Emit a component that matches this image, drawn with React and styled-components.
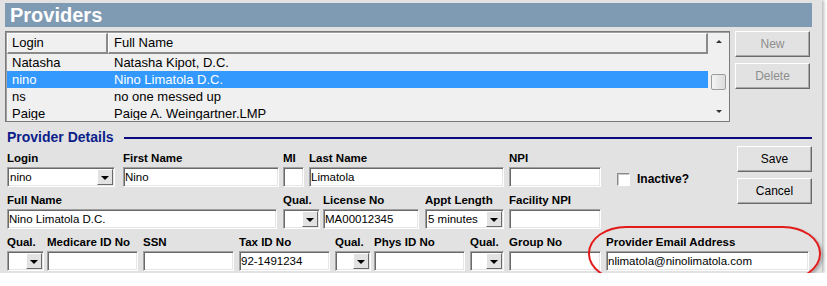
import React from "react";
import styled, { createGlobalStyle } from "styled-components";

const GlobalStyle = createGlobalStyle`
  body {
    margin: 0;
    background: #ffffff;
    font-family: "Liberation Sans", Arial, sans-serif;
  }
`;

const Window = styled.div`
  position: relative;
  width: 822px;
  height: 273px;
  box-sizing: border-box;
  padding: 3px 10px 0 5px;
  background: #e2e2e2;
  box-shadow: 2px 0 3px rgba(0, 0, 0, 0.28);
`;

const TitleBar = styled.div`
  height: 24px;
  padding-left: 5px;
  background: #7f9bb4;
  color: #ffffff;
  font: bold 20px/24px "Liberation Sans", Arial, sans-serif;
`;

const TopSection = styled.div`
  display: flex;
  gap: 5px;
  margin-top: 4px;
`;

const ListBox = styled.div`
  display: flex;
  width: 725px;
  height: 91px;
  box-sizing: border-box;
  border: 1px solid #7a7a7a;
  box-shadow: inset 1px 1px 0 #a0a0a0;
  padding: 1px;
  background: #f0f0f0;
  overflow: hidden;
`;

const ListMain = styled.div`
  width: 701px;
  overflow: hidden;
`;

const ListHeader = styled.div`
  display: flex;
  height: 21px;
`;

const HeaderCell = styled.div`
  box-sizing: border-box;
  width: ${({ $w }) => $w}px;
  padding-left: ${({ $pl }) => $pl}px;
  border-top: 1px solid #ffffff;
  border-left: 1px solid #ffffff;
  border-right: 2px solid #8a8a8a;
  border-bottom: 2px solid #8a8a8a;
  font-size: 13px;
  line-height: 18px;
  color: #000;
`;

const ListRow = styled.div`
  display: flex;
  height: 17px;
  background: ${({ $selected }) => ($selected ? "#3399ff" : "transparent")};
  color: ${({ $selected }) => ($selected ? "#ffffff" : "#000000")};
  font-size: 13px;
  line-height: 17px;
`;

const ListCell = styled.div`
  box-sizing: border-box;
  width: ${({ $w }) => ($w ? `${$w}px` : "auto")};
  padding-left: ${({ $pl }) => $pl}px;
  white-space: nowrap;
`;

const ScrollBar = styled.div`
  display: flex;
  flex-direction: column;
  align-items: center;
  width: 19px;
  margin-left: 1px;
  background: #f0f0f0;
`;

const ArrowBox = styled.div`
  display: flex;
  align-items: center;
  justify-content: center;
  height: 17px;
`;

const Arrow = styled.div`
  width: 0;
  height: 0;
  border-left: 3px solid transparent;
  border-right: 3px solid transparent;
  ${({ $dir }) =>
    $dir === "up"
      ? "border-bottom: 3px solid #333;"
      : "border-top: 3px solid #333;"}
`;

const Thumb = styled.div`
  width: 15px;
  height: 16px;
  margin-top: 24px;
  box-sizing: border-box;
  border: 1px solid #9c9c9c;
  border-radius: 2px;
  background: linear-gradient(to right, #f4f4f4, #dcdcdc);
`;

const Spacer = styled.div`
  flex: 1;
`;

const ButtonColumn = styled.div`
  display: flex;
  flex-direction: column;
  gap: 6px;
  padding-top: ${({ $pt }) => $pt || 0}px;
`;

const Button = styled.button`
  width: 75px;
  height: 26px;
  padding: 0;
  box-sizing: border-box;
  background: #e2e2e2;
  border: 1px solid;
  border-color: #ffffff #6a6a6a #6a6a6a #ffffff;
  box-shadow: inset -1px -1px 0 #a8a8a8;
  font: 12px "Liberation Sans", Arial, sans-serif;
  color: ${({ disabled }) => (disabled ? "#8e8e8e" : "#000000")};
`;

const SectionHeader = styled.div`
  display: flex;
  align-items: center;
  height: 16px;
  margin-top: 7px;
  padding-left: 2px;
`;

const SectionTitle = styled.div`
  font: bold 14px/16px "Liberation Sans", Arial, sans-serif;
  color: #0c1e8a;
  white-space: nowrap;
`;

const SectionLine = styled.div`
  flex: 1;
  height: 2px;
  margin-left: 10px;
  margin-top: 1px;
  background: #0a0a7e;
`;

const FormTop = styled.div`
  display: flex;
  padding-left: 2px;
`;

const FieldsColumn = styled.div`
  display: flex;
  flex-direction: column;
  gap: 6px;
  padding-top: 6px;
`;

const Row = styled.div`
  display: flex;
  margin-top: ${({ $mt }) => $mt || 0}px;
  padding-left: ${({ $pl }) => $pl || 0}px;
`;

const Field = styled.div`
  position: relative;
  display: flex;
  flex-direction: column;
  gap: 2px;
  width: ${({ $w }) => $w}px;
  margin-left: ${({ $ml }) => $ml || 0}px;
`;

const Label = styled.div`
  height: 14px;
  font: bold 11.5px/14px "Liberation Sans", Arial, sans-serif;
  color: #000;
  white-space: nowrap;
`;

const Input = styled.div`
  display: flex;
  align-items: center;
  height: 20px;
  box-sizing: border-box;
  padding-left: 1px;
  background: #ffffff;
  border: 1px solid;
  border-color: #a0a0a0 #ffffff #ffffff #a0a0a0;
  box-shadow: inset 1px 1px 0 #6a6a6a, inset -1px -1px 0 #e6e6e6;
  font: 11.5px "Liberation Sans", Arial, sans-serif;
  color: #000;
  white-space: nowrap;
  overflow: hidden;
`;

const SelectText = styled.div`
  flex: 1;
  padding-left: 1px;
`;

const DropButton = styled.div`
  display: flex;
  align-items: center;
  justify-content: center;
  width: 16px;
  height: 16px;
  margin-right: 1px;
  box-sizing: border-box;
  background: #e2e2e2;
  border: 1px solid;
  border-color: #ffffff #6a6a6a #6a6a6a #ffffff;
`;

const DropArrow = styled.div`
  width: 0;
  height: 0;
  margin-top: 1px;
  border-left: 4px solid transparent;
  border-right: 4px solid transparent;
  border-top: 4px solid #000;
`;

const InactiveBox = styled.div`
  display: flex;
  align-items: center;
  gap: 7px;
  height: 14px;
  margin-left: 16px;
  margin-top: 27px;
  font: bold 12px "Liberation Sans", Arial, sans-serif;
`;

const CheckBox = styled.div`
  width: 13px;
  height: 13px;
  box-sizing: border-box;
  background: #ffffff;
  border: 1px solid;
  border-color: #8a8a8a #ffffff #ffffff #8a8a8a;
  box-shadow: inset 1px 1px 0 #c8c8c8;
`;

const Highlight = styled.div`
  position: absolute;
  left: -18px;
  top: -9px;
  width: 233px;
  height: 55px;
  box-sizing: border-box;
  border: 2px solid #e31b1b;
  border-radius: 38px / 27px;
  box-shadow: 2px 2px 3px rgba(0, 0, 0, 0.25);
  pointer-events: none;
`;

const Select = ({ value }) => (
  <Input>
    <SelectText>{value}</SelectText>
    <DropButton>
      <DropArrow />
    </DropButton>
  </Input>
);

const TextField = ({ label, value, w, ml, select, children }) => (
  <Field $w={w} $ml={ml}>
    <Label>{label}</Label>
    {select ? <Select value={value} /> : <Input>{value}</Input>}
    {children}
  </Field>
);

const providers = [
  { login: "Natasha", name: "Natasha Kipot, D.C." },
  { login: "nino", name: "Nino Limatola D.C.", selected: true },
  { login: "ns", name: "no one messed up" },
  { login: "Paige", name: "Paige A. Weingartner.LMP" },
];

const App = () => (
  <>
    <GlobalStyle />
    <Window>
      <TitleBar>Providers</TitleBar>

      <TopSection>
        <ListBox>
          <ListMain>
            <ListHeader>
              <HeaderCell $w={101} $pl={4}>Login</HeaderCell>
              <HeaderCell $w={600} $pl={5}>Full Name</HeaderCell>
            </ListHeader>
            {providers.map((p) => (
              <ListRow key={p.login} $selected={p.selected}>
                <ListCell $w={107} $pl={5}>{p.login}</ListCell>
                <ListCell $pl={0}>{p.name}</ListCell>
              </ListRow>
            ))}
          </ListMain>
          <ScrollBar>
            <ArrowBox>
              <Arrow $dir="up" />
            </ArrowBox>
            <Thumb />
            <Spacer />
            <ArrowBox>
              <Arrow $dir="down" />
            </ArrowBox>
          </ScrollBar>
        </ListBox>
        <ButtonColumn>
          <Button disabled>New</Button>
          <Button disabled>Delete</Button>
        </ButtonColumn>
      </TopSection>

      <SectionHeader>
        <SectionTitle>Provider Details</SectionTitle>
        <SectionLine />
      </SectionHeader>

      <FormTop>
        <FieldsColumn>
          <Row>
            <TextField label="Login" value="nino" w={108} select />
            <TextField label="First Name" value="Nino" w={156} ml={8} />
            <TextField label="MI" value="" w={21} ml={4} />
            <TextField label="Last Name" value="Limatola" w={195} ml={5} />
            <TextField label="NPI" value="" w={92} ml={5} />
          </Row>
          <Row>
            <TextField label="Full Name" value="Nino Limatola D.C." w={270} />
            <TextField label="Qual." value="" w={37} ml={6} select />
            <TextField label="License No" value="MA00012345" w={96} ml={3} />
            <TextField label="Appt Length" value="5 minutes" w={79} ml={6} select />
            <TextField label="Facility NPI" value="" w={92} ml={5} />
          </Row>
        </FieldsColumn>
        <InactiveBox>
          <CheckBox />
          Inactive?
        </InactiveBox>
        <Spacer />
        <ButtonColumn $pt={1}>
          <Button>Save</Button>
          <Button>Cancel</Button>
        </ButtonColumn>
      </FormTop>

      <Row $mt={6} $pl={2}>
        <TextField label="Qual." value="" w={37} select />
        <TextField label="Medicare ID No" value="" w={91} ml={3} />
        <TextField label="SSN" value="" w={91} ml={5} />
        <TextField label="Tax ID No" value="92-1491234" w={91} ml={5} />
        <TextField label="Qual." value="" w={36} ml={5} select />
        <TextField label="Phys ID No" value="" w={91} ml={3} />
        <TextField label="Qual." value="" w={34} ml={5} select />
        <TextField label="Group No" value="" w={92} ml={5} />
        <TextField
          label="Provider Email Address"
          value="nlimatola@ninolimatola.com"
          w={203}
          ml={5}
        >
          <Highlight />
        </TextField>
      </Row>
    </Window>
  </>
);

export default App;
